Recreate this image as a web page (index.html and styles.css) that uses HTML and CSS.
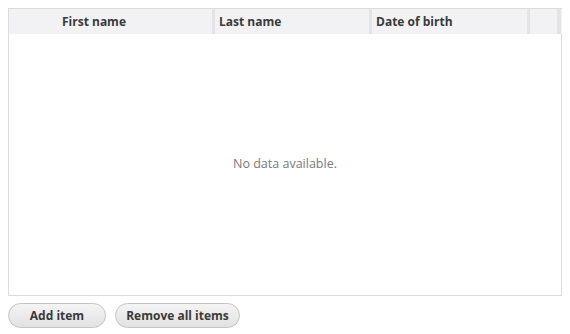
FILE: index.html
```html
<!DOCTYPE html>
<html lang="en">
<head>
    <meta charset="UTF-8">
    <title>Grid</title>
    <link rel="stylesheet" href="styles.css">
</head>
<body>
    <div class="grid">
        <div class="grid-header">
            <div class="cell first"><span>First name</span></div>
            <div class="sep"></div>
            <div class="cell second"><span>Last name</span></div>
            <div class="sep"></div>
            <div class="cell third"><span>Date of birth</span></div>
            <div class="sep"></div>
            <div class="cell scroll"></div>
            <div class="sep last"></div>
        </div>
        <div class="grid-body">
            <div class="empty">No data available.</div>
        </div>
    </div>
    <div class="actions">
        <button class="btn add">Add item</button>
        <button class="btn remove">Remove all items</button>
    </div>
</body>
</html>
```

FILE: styles.css
```css
body{
    margin: 8px;
    font-family: "Open Sans", "Noto Sans", sans-serif;
    background: #fff;
}
.grid{
    width: 552px;
    height: 286px;
    border: 1px solid #dcdcdc;
    display: flex;
    flex-direction: column;
}
.grid-header{
    display: flex;
    height: 25px;
    background: #f2f2f4;
    margin-right: -1px;
}
.cell{
    font-size: 12px;
    font-weight: 700;
    color: #3a3a3a;
    line-height: 25px;
    padding-left: 4px;
    box-sizing: border-box;
    white-space: nowrap;
}
.first{
    width: 203px;
    padding-left: 53px;
}
.second{
    width: 154px;
}
.third{
    width: 155px;
}
.scroll{
    width: 27px;
}
.sep{
    width: 3px;
    background: #e4e4e6;
}
.sep.last{
    width: 4px;
}
.grid-body{
    flex: 1;
    display: flex;
    align-items: center;
    justify-content: center;
}
.empty{
    font-size: 12.5px;
    color: #7a7a7a;
    margin-bottom: 3px;
}
.actions{
    display: flex;
    gap: 9px;
    margin-top: 7px;
}
.btn{
    font-family: inherit;
    font-size: 12px;
    font-weight: 700;
    color: #3a3a3a;
    height: 25px;
    padding: 0;
    white-space: nowrap;
    border: 1px solid #c4c4c4;
    border-radius: 13px;
    background: linear-gradient(#f4f4f4, #e2e2e2);
}
.add{
    width: 98px;
}
.remove{
    width: 125px;
}
```
